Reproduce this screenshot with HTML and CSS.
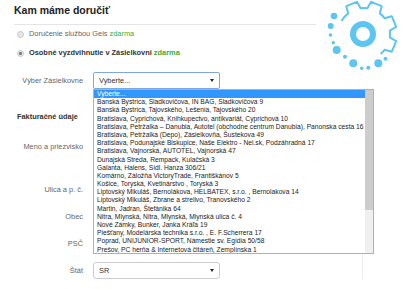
FILE: index.html
```html
<!DOCTYPE html>
<html lang="sk">
	<head>
		<meta charset="UTF-8">
		<meta name="viewport" content="width=device-width, initial-scale=1.0">
		<title>Kam máme doručiť</title>
		<link rel="stylesheet" href="styles.css">
	</head>
	<body>
		<div class="page">
			<header class="head">
				<h1>Kam máme doručiť</h1>
				<svg class="gear" viewBox="0 0 76 74" aria-hidden="true">
					<path class="teeth" d="M15.5,21 A26,26 0 0 1 22.2,13.4 L20.3,6.2 L30.9,1.8 L34.6,8.2 A26,26 0 0 1 41.4,8.2 L45.1,1.8 L55.7,6.2 L53.8,13.4 A26,26 0 0 1 58.6,18.2 L65.8,16.3 L70.2,26.9 L63.8,30.6 A26,26 0 0 1 63.8,37.4 L70.2,41.1 L65.8,51.7 L58.6,49.8 A26,26 0 0 1 54.7,53.9"/>
					<circle class="ring" cx="37" cy="34" r="10"/>
					<g class="dots">
						<circle cx="8" cy="16" r="3.3"/>
						<circle cx="4.7" cy="26" r="3"/>
						<circle cx="4.5" cy="35" r="1.8"/>
						<circle cx="7.3" cy="42.7" r="1.7"/>
						<circle cx="10.7" cy="50" r="4"/>
						<circle cx="19" cy="56.7" r="2"/>
						<circle cx="27.3" cy="63.3" r="4"/>
						<circle cx="35.7" cy="68.3" r="1.7"/>
						<circle cx="42.3" cy="67.7" r="2"/>
						<circle cx="52.3" cy="63.3" r="4"/>
						<circle cx="59.5" cy="58.8" r="2"/>
					</g>
				</svg>
			</header>
			<main class="form">
				<ul class="ship">
					<li><span class="radio"></span><span>Doručenie službou Geis <span class="free">zdarma</span></span></li>
					<li class="on"><span class="radio"></span><span>Osobné vyzdvihnutie v Zásielkovni <span class="free">zdarma</span></span></li>
				</ul>
				<div class="row pick">
					<label>Výber Zásielkovne</label>
					<div class="select focus">
						<span>Vyberte...</span><i class="arrow"></i>
						<div class="list">
							<ul>
								<li class="hl">Vyberte...</li>
								<li>Banská Bystrica, Sladkovičova, IN BAG, Sladkovičova 9</li>
								<li>Banská Bystrica, Tajovského, Lešenia, Tajovského 20</li>
								<li>Bratislava, Cyprichová, Knihkupectvo, antikvariát, Cyprichová 10</li>
								<li>Bratislava, Petržalka – Danubia, Autotel (obchodne centrum Danubia), Panonska cesta 16</li>
								<li>Bratislava, Petržalka (Depo), Zásielkovňa, Šustekova 49</li>
								<li>Bratislava, Podunajské Biskupice, Naše Elektro - Nel.sk, Podzáhradná 17</li>
								<li>Bratislava, Vajnorská, AUTOTEL, Vajnorská 47</li>
								<li>Dunajská Streda, Rempack, Kulačská 3</li>
								<li>Galanta, Halens, Sídl. Hanza 306/21</li>
								<li>Komárno, Záložňa VictoryTrade, Františkánov 5</li>
								<li>Košice, Toryská, Kvetinárstvo , Toryská 3</li>
								<li>Liptovský Mikuláš, Bernolákova, HELBATEX, s.r.o. , Bernolakova 14</li>
								<li>Liptovský Mikuláš, Zbrane a strelivo, Tranovského 2</li>
								<li>Martin, Jadran, Štefánika 64</li>
								<li>Nitra, Mlynská, Nitra, Mlynská, Mlynská ulica č. 4</li>
								<li>Nové Zámky, Bunker, Janka Kráľa 19</li>
								<li>Piešťany, Modelárska technika s.r.o. , E. F.Scherrera 17</li>
								<li>Poprad, UNIJUNIOR-SPORT, Námestie sv. Egídia 50/58</li>
								<li>Prešov, PC herňa &amp; Internetová čitáreň, Zemplínska 1</li>
							</ul>
							<div class="scroll"><div class="thumb"></div></div>
						</div>
					</div>
				</div>
				<section class="billing">
					<h2>Fakturačné údaje</h2>
					<div class="row name"><label>Meno a priezvisko</label><input type="text"></div>
					<div class="row"><label>Ulica a p. č.</label><input type="text"></div>
					<div class="row"><label>Obec</label><input type="text"></div>
					<div class="row"><label>PSČ</label><input type="text"></div>
					<div class="row"><label>Štát</label><div class="select"><span>SR</span><i class="arrow"></i></div></div>
				</section>
			</main>
		</div>
	</body>
</html>
```

FILE: styles.css
```css
body {
	margin: 0;
	font-family: "Liberation Sans", Arial, sans-serif;
	font-size: 7.4px;
	color: #666;
	background: #fff;
}

.page {
	width: 403px;
	height: 289px;
	overflow: hidden;
}

.head {
	display: flex;
	align-items: flex-start;
	height: 25px;
}

.head h1 {
	margin: 0 0 0 14px;
	width: 302px;
	height: 25px;
	box-sizing: border-box;
	padding-top: 4px;
	font-size: 10.5px;
	line-height: 12px;
	color: #222;
	border-bottom: 1px solid #e4e4e4;
}

.gear {
	flex: none;
	width: 76px;
	height: 74px;
	margin-left: 10px;
}

.gear .teeth {
	fill: none;
	stroke: #5cc5f0;
	stroke-width: 2;
	stroke-linejoin: round;
}

.gear .ring {
	fill: none;
	stroke: #5cc5f0;
	stroke-width: 6;
}

.gear .dots {
	fill: #5cc5f0;
}

.ship {
	list-style: none;
	margin: 4px 0 0;
	padding: 0 0 0 17px;
}

.ship li {
	display: flex;
	align-items: center;
	gap: 5px;
	line-height: 10px;
	margin-bottom: 9px;
}

.ship .radio {
	width: 5px;
	height: 5px;
	border-radius: 50%;
	border: 0.5px solid #c8c8c8;
	background: #e6e6e6;
}

.ship .on {
	font-weight: bold;
	color: #333;
}

.ship .on .radio {
	background: radial-gradient(circle, #777 0 1.3px, #e6e6e6 1.6px);
}

.free {
	color: #3aad3a;
}

.row {
	display: flex;
	align-items: center;
	height: 17px;
	margin-bottom: 10px;
}

.row label {
	flex: none;
	width: 93px;
	box-sizing: border-box;
	padding-right: 10px;
	text-align: right;
	color: #666;
}

.row.pick {
	width: 363px;
	margin: 14px 0 0;
}

.row.name {
	margin-bottom: 26px;
}

.row input {
	width: 127px;
	height: 17px;
	box-sizing: border-box;
	border: 1px solid #ccc;
	border-radius: 3px;
	margin: 0;
}

.billing {
	width: 363px;
	box-sizing: border-box;
	padding-top: 23px;
	border-right: 1px solid #ececec;
}

h2 {
	margin: 0 0 16px 17px;
	font-size: 7.4px;
	line-height: 10px;
	color: #333;
}

.select {
	position: relative;
	display: flex;
	align-items: center;
	width: 127px;
	height: 17px;
	box-sizing: border-box;
	padding: 0 5px;
	border: 1px solid #ccc;
	border-radius: 3px;
	color: #333;
}

.select.focus {
	border-color: #7fa6dd;
	border-radius: 2px;
	z-index: 1;
}

.select .arrow {
	margin-left: auto;
	width: 0;
	height: 0;
	border-left: 2px solid transparent;
	border-right: 2px solid transparent;
	border-top: 3px solid #222;
}

.list {
	position: absolute;
	left: -1px;
	top: 16px;
	display: flex;
	width: 281px;
	height: 165px;
	box-sizing: border-box;
	border: 1px solid #a5b1c4;
	background: #fff;
}

.list ul {
	flex: 1;
	list-style: none;
	margin: 0;
	padding: 0;
	overflow: hidden;
}

.list li {
	height: 8.2px;
	line-height: 8.2px;
	padding-left: 3px;
	font-size: 6.7px;
	color: #222;
	white-space: nowrap;
}

.list li.hl {
	background: #3297fd;
	color: #fff;
}

.scroll {
	flex: none;
	width: 8px;
	background: #f0f0f0;
}

.thumb {
	height: 120px;
	background: #cdcdcd;
}
```
